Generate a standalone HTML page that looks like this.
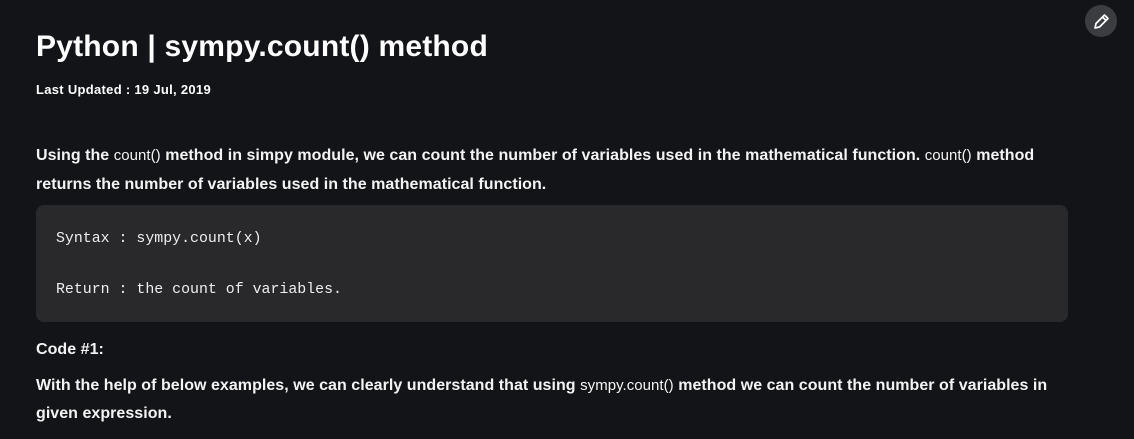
<!DOCTYPE html>
<html><head><meta charset="utf-8"><style>
body{margin:0;width:1134px;height:439px;background:#131417;color:#fff;font-family:"Liberation Sans",sans-serif;overflow:hidden;position:relative}
.a{position:absolute;left:36px;white-space:nowrap}
h1{margin:0;font-size:30px;font-weight:bold;top:30px;letter-spacing:0.2px}
.d{font-size:13px;font-weight:bold;top:82px;letter-spacing:0.3px}
.p{font-size:16px;font-weight:bold;letter-spacing:0.04px;color:#f3f3f3}
.p span{font-weight:normal;font-size:15px}
.code{position:absolute;left:36px;top:205px;width:1032px;height:117px;background:#29292c;border-radius:8px}
.m{position:absolute;left:20px;font-family:"Liberation Mono",monospace;font-size:14.9px;color:#eee;white-space:pre}
.btn{position:absolute;left:1085px;top:5px;width:32px;height:32px;border-radius:50%;background:#3c3d41}
</style></head><body>
<h1 class="a">Python | sympy.count() method</h1>
<div class="a d">Last Updated : 19 Jul, 2019</div>
<div class="a p" style="top:147px">Using the <span>count()</span> method in simpy module, we can count the number of variables used in the mathematical function. <span>count()</span> method</div>
<div class="a p" style="top:176px">returns the number of variables used in the mathematical function.</div>
<div class="code"><div class="m" style="top:26px">Syntax : sympy.count(x)</div><div class="m" style="top:77px">Return : the count of variables.</div></div>
<div class="a p" style="top:341px">Code #1:</div>
<div class="a p" style="top:377px">With the help of below examples, we can clearly understand that using <span>sympy.count()</span> method we can count the number of variables in</div>
<div class="a p" style="top:405px">given expression.</div>
<div class="btn"><svg width="32" height="32" viewBox="0 0 32 32"><path d="M10 23l1-4.5 8.5-8.5 3.5 3.5-8.5 8.5z M17.5 12l3.5 3.5" fill="none" stroke="#fff" stroke-width="1.7" stroke-linejoin="round"/></svg></div>
</body></html>
